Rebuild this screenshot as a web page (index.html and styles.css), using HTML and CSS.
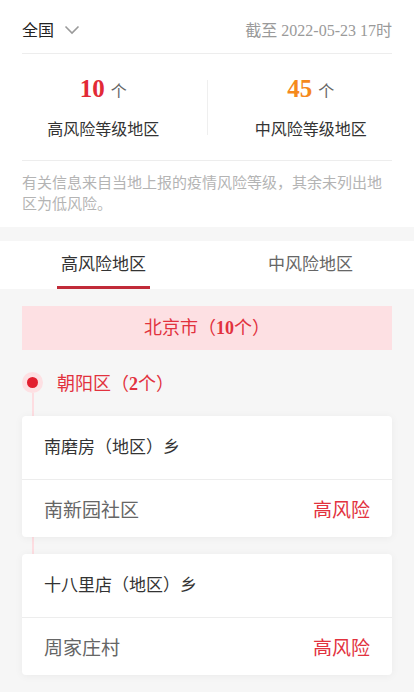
FILE: index.html
```html
<!DOCTYPE html>
<html lang="zh-CN">
<head>
  <meta charset="UTF-8">
  <title>风险等级地区</title>
  <link rel="stylesheet" href="styles.css">
</head>
<body>
    <!-- 概览 -->
    <div class="summary">
        <div class="summary-head">
            <div class="area-select">
                <span>全国</span>
                <svg class="chevron" width="16" height="10" viewBox="0 0 16 10">
                    <polyline points="1.5,1.5 8,8 14.5,1.5" fill="none" stroke="#9a9a9a" stroke-width="1.6"/>
                </svg>
            </div>
            <div class="update-time">截至 2022-05-23 17时</div>
        </div>

        <div class="stats">
            <div class="stat">
                <div class="stat-num"><b class="high">10</b> 个</div>
                <div class="stat-label">高风险等级地区</div>
            </div>
            <div class="stats-divider"></div>
            <div class="stat">
                <div class="stat-num"><b class="mid">45</b> 个</div>
                <div class="stat-label">中风险等级地区</div>
            </div>
        </div>

        <p class="note">有关信息来自当地上报的疫情风险等级，其余未列出地区为低风险。</p>
    </div>

    <!-- 选项卡 -->
    <div class="tabs">
        <div class="tab"><span class="tab-text active">高风险地区</span></div>
        <div class="tab"><span class="tab-text">中风险地区</span></div>
    </div>

    <div class="content">
        <div class="city">北京市（<b>10</b>个）</div>

        <div class="district">
            <div class="district-head">
                <span class="dot"></span>
                <span class="district-name">朝阳区（<b>2</b>个）</span>
            </div>

            <div class="card">
                <div class="card-title">南磨房（地区）乡</div>
                <div class="card-row">
                    <span>南新园社区</span>
                    <span class="level">高风险</span>
                </div>
            </div>

            <div class="card">
                <div class="card-title">十八里店（地区）乡</div>
                <div class="card-row">
                    <span>周家庄村</span>
                    <span class="level">高风险</span>
                </div>
            </div>
        </div>
    </div>
</body>
</html>
```

FILE: styles.css
```css
body {
  margin: 0;
  background-color: #f6f6f6;
  font-family: "Liberation Serif", "Noto Sans CJK SC", serif;
  color: #333;
}

/* 顶部概览 */
.summary {
  background-color: #fff;
}

.summary-head {
  display: flex;
  justify-content: space-between;
  align-items: center;
  height: 54px;
  box-sizing: border-box;
  margin: 0 22px;
  padding-top: 4px;
  border-bottom: 1px solid #ededed;
}

.area-select {
  display: flex;
  align-items: center;
  font-size: 16px;
  color: #222;
}

.chevron {
  margin-left: 10px;
  margin-top: 2px;
}

.update-time {
  font-size: 16px;
  color: #9a9a9a;
}

.stats {
  display: flex;
  align-items: center;
  height: 106px;
}

.stat {
  flex: 1;
  text-align: center;
}

.stat-num {
  font-size: 16px;
  line-height: 30px;
  color: #666;
}

.stat-num b {
  font-size: 25px;
  margin-right: 2px;
}

.high { color: #e22a36; }
.mid { color: #f5891c; }

.stat-label {
  margin-top: 12px;
  font-size: 16px;
  line-height: 22px;
  color: #333;
}

.stats-divider {
  width: 1px;
  height: 55px;
  background-color: #efefef;
}

.note {
  margin: 0 22px;
  padding: 12px 0;
  font-size: 15px;
  line-height: 21px;
  color: #b4b4b4;
  border-top: 1px solid #ededed;
}

/* 选项卡 */
.tabs {
  display: flex;
  margin-top: 14px;
  background-color: #fff;
}

.tab {
  flex: 1;
  display: flex;
  justify-content: center;
}

.tab-text {
  padding: 12px 4px 9px;
  font-size: 17px;
  line-height: 24px;
  color: #666;
  border-bottom: 3px solid transparent;
}

.tab-text.active {
  color: #333;
  border-bottom-color: #c12b38;
}

/* 列表 */
.content {
  padding: 17px 22px;
}

.city {
  height: 44px;
  line-height: 44px;
  text-align: center;
  background-color: #fde0e3;
  color: #e2323e;
  font-size: 18px;
}

.district {
  position: relative;
  margin-top: 12px;
}

/* 时间线 */
.district::before {
  content: "";
  position: absolute;
  left: 10px;
  top: 31px;
  bottom: 0;
  width: 2px;
  background-color: #fddde1;
}

.district-head {
  display: flex;
  align-items: center;
  height: 40px;
}

.dot {
  display: flex;
  justify-content: center;
  align-items: center;
  width: 21px;
  height: 21px;
  border-radius: 50%;
  background-color: #fde0e3;
}

.dot::after {
  content: "";
  width: 11px;
  height: 11px;
  border-radius: 50%;
  background-color: #e21f2f;
}

.district-name {
  margin-left: 14px;
  font-size: 18px;
  color: #e2323e;
}

.card {
  position: relative;
  margin-top: 14px;
  background-color: #fff;
  border-radius: 4px;
  box-shadow: 0 1px 8px rgba(0, 0, 0, 0.05);
}

.card + .card {
  margin-top: 17px;
}

.card-title {
  height: 63px;
  line-height: 63px;
  padding: 0 22px;
  font-size: 17px;
  color: #333;
  border-bottom: 1px solid #ededed;
}

.card-row {
  display: flex;
  justify-content: space-between;
  align-items: center;
  height: 57px;
  padding: 0 22px;
  font-size: 19px;
  color: #666;
}

.level {
  color: #e2323e;
}
```
